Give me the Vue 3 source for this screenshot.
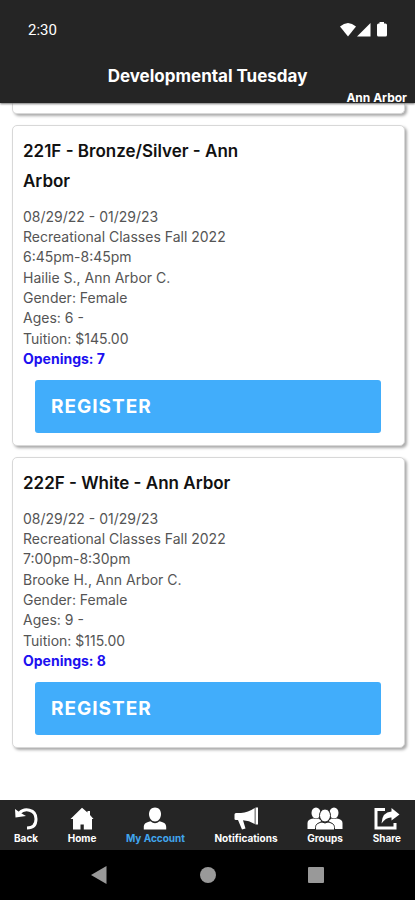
<script setup>
const classes = [
  {
    title: '221F - Bronze/Silver - Ann Arbor',
    details: ['08/29/22 - 01/29/23', 'Recreational Classes Fall 2022', '6:45pm-8:45pm', 'Hailie S., Ann Arbor C.', 'Gender: Female', 'Ages: 6 -', 'Tuition: $145.00'],
    openings: 7
  },
  {
    title: '222F - White - Ann Arbor',
    details: ['08/29/22 - 01/29/23', 'Recreational Classes Fall 2022', '7:00pm-8:30pm', 'Brooke H., Ann Arbor C.', 'Gender: Female', 'Ages: 9 -', 'Tuition: $115.00'],
    openings: 8
  }
]
</script>

<template>
  <div class="screen">
    <header class="top">
      <div class="status">
        <span>2:30</span>
        <svg width="48" height="16" viewBox="0 0 48 16" fill="#fff" aria-hidden="true">
          <path d="M0 4.500Q8 -2.500 16 4.500L8 14.500Z" />
          <path d="M17 14.500H30.500V1Z" />
          <path d="M39.500 0H44v1.500h1.500a1.500 1.500 0 0 1 1.500 1.500V13a1.500 1.500 0 0 1-1.500 1.500h-7A1.500 1.500 0 0 1 37 13V3a1.500 1.500 0 0 1 1.500-1.500h1Z" />
        </svg>
      </div>
      <h1>Developmental Tuesday</h1>
      <p class="place">Ann Arbor</p>
    </header>

    <main class="list">
      <div class="card card-end"></div>
      <article v-for="c in classes" :key="c.title" class="card">
        <h2>{{ c.title }}</h2>
        <ul>
          <li v-for="d in c.details" :key="d">{{ d }}</li>
          <li class="openings">Openings: {{ c.openings }}</li>
        </ul>
        <button type="button" class="register">REGISTER</button>
      </article>
    </main>

    <nav class="tabs">
      <a href="#back">
        <svg width="24" height="24" viewBox="0 0 24 24" aria-hidden="true">
          <path d="M5.500 6C10 1 22 1.500 22 12C22 18 18.500 21 13 21" fill="none" stroke="#fff" stroke-width="3" />
          <path d="M1 2L4.500 4.500L8.500 7L12 9L1.500 10.500Z" fill="#fff" />
        </svg>
        <span>Back</span>
      </a>
      <a href="#home">
        <svg width="24" height="24" viewBox="0 0 24 24" fill="#fff" aria-hidden="true">
          <path d="M12 .8L17.500 5.500V4h2.500v4L23.500 12H22V22.500H13.800V17.500h-3.300v5H3V12H.5Z" />
        </svg>
        <span>Home</span>
      </a>
      <a href="#account" class="active">
        <svg width="24" height="24" viewBox="0 0 24 24" fill="#fff" aria-hidden="true">
          <path d="M12 .5C15.600 .5 18 3.300 18 7c0 4-2.500 7.500-6 7.500S6 11 6 7C6 3.300 8.400 .5 12 .5Z" />
          <path d="M.8 22.500V20c0-3 2-4.700 6.700-5.700Q12 18 16.500 14.300C21.200 15.300 23.200 17 23.200 20v2.500Z" />
        </svg>
        <span>My Account</span>
      </a>
      <a href="#notifications">
        <svg width="26" height="24" viewBox="0 0 26 24" fill="#fff" aria-hidden="true">
          <path d="M22.500 .5H25v17H22.500Z" />
          <path d="M21.700 1V17Q16 13.500 10 13.200L12.500 21.500L9 22.500L5 13H3Q1.500 13 1.500 12V7.500Q1.500 6 3 6H8Q15 5.500 21.700 1Z" />
        </svg>
        <span>Notifications</span>
      </a>
      <a href="#groups">
        <svg width="36" height="24" viewBox="0 0 36 24" fill="#fff" aria-hidden="true">
          <ellipse cx="9" cy="6" rx="4.500" ry="5.500" />
          <ellipse cx="27" cy="6" rx="4.500" ry="5.500" />
          <path d="M.5 22V16c0-2.500 2-4 6-4.500q2.500 1 5 0l3 2.500L9 18v4ZM35.500 22V16c0-2.500-2-4-6-4.500q-2.500 1-5 0l-3 2.500L27 18v4Z" />
          <g stroke="#252525">
            <ellipse cx="18" cy="8.500" rx="5.500" ry="6.500" />
            <path d="M8.500 23V20.500c0-3 2-4.500 6.500-5.500q3 2 6 0c4.500 1 6.500 2.500 6.500 5.500V23Z" />
          </g>
        </svg>
        <span>Groups</span>
      </a>
      <a href="#share">
        <svg width="26" height="24" viewBox="0 0 26 24" aria-hidden="true">
          <path d="M11 2.500H2V21H21V16" fill="none" stroke="#fff" stroke-width="3" />
          <path d="M17.500 1L25.500 7.500L17.500 13.500V10.500Q12 10 7.500 16.500Q8 5 17.500 4.500Z" fill="#fff" />
        </svg>
        <span>Share</span>
      </a>
    </nav>

    <div class="system">
      <button type="button" aria-label="Back">
        <svg width="18" height="20" viewBox="0 0 18 20"><path d="M0 10L15.500 1V19Z" /></svg>
      </button>
      <button type="button" aria-label="Home">
        <svg width="18" height="20" viewBox="0 0 18 20"><circle cx="9" cy="10" r="8" /></svg>
      </button>
      <button type="button" aria-label="Recent apps">
        <svg width="18" height="20" viewBox="0 0 18 20"><rect x="1" y="2" width="16" height="16" rx="1" /></svg>
      </button>
    </div>
  </div>
</template>

<style>
body {
  margin: 0;
  background: #fff;
}
</style>

<style scoped>
.screen {
  display: flex;
  flex-direction: column;
  min-height: 100vh;
  font-family: Inter, "Liberation Sans", sans-serif;
}
h1, h2, p, ul {
  margin: 0;
  padding: 0;
}
.top {
  background: #252525;
  color: #fff;
  box-shadow: 0 1px 2px #777;
  position: relative;
}
.status {
  display: flex;
  justify-content: space-between;
  align-items: center;
  height: 60px;
  padding: 0 27px 0 28px;
  font: 400 15px Roboto, sans-serif;
}
h1 {
  text-align: center;
  font-size: 17px;
  line-height: 32px;
  font-weight: 700;
}
.place {
  text-align: right;
  padding: 0 8px;
  font-size: 12px;
  line-height: 11px;
  font-weight: 700;
}
.list {
  flex: 1;
  display: flex;
  flex-direction: column;
  gap: 11px;
  padding: 0 10px 40px 12px;
}
.card {
  border: 1px solid #d8d8d8;
  border-radius: 5px;
  padding: 10px 23px 12px 10px;
  box-shadow: 2px 2px 3px #aaa;
  background: #fff;
}
.card-end {
  border-top: 0;
  border-radius: 0 0 5px 5px;
  padding: 10px 0 0;
}
h2 {
  max-width: 240px;
  color: #111;
  font-size: 17px;
  line-height: 30px;
  font-weight: 600;
}
ul {
  list-style: none;
  margin: 10px 0 11px;
  color: #555;
  font-size: 14px;
  line-height: 20px;
}
li:nth-child(3n + 1) {
  padding-top: 1px;
}
.openings {
  color: #1c10f0;
  font-weight: 700;
}
.register {
  display: block;
  width: calc(100% - 12px);
  height: 53px;
  margin-left: 12px;
  padding: 0 16px;
  border: 0;
  border-radius: 3px;
  background: #41adfb;
  color: #fff;
  font-family: inherit;
  font-size: 19px;
  font-weight: 700;
  letter-spacing: 1px;
  text-align: left;
}
.tabs {
  display: flex;
  justify-content: space-between;
  padding: 7px 14px 5px;
  background: #252525;
}
.tabs a {
  display: flex;
  flex-direction: column;
  align-items: center;
  color: #fff;
  font-size: 10px;
  line-height: 14px;
  font-weight: 700;
  text-decoration: none;
}
.tabs .active {
  color: #41a5ee;
}
.system {
  display: flex;
  justify-content: center;
  gap: 90px;
  height: 50px;
  background: #000;
}
.system button {
  display: flex;
  align-items: center;
  padding: 0;
  border: 0;
  background: none;
  fill: #999;
}
</style>
